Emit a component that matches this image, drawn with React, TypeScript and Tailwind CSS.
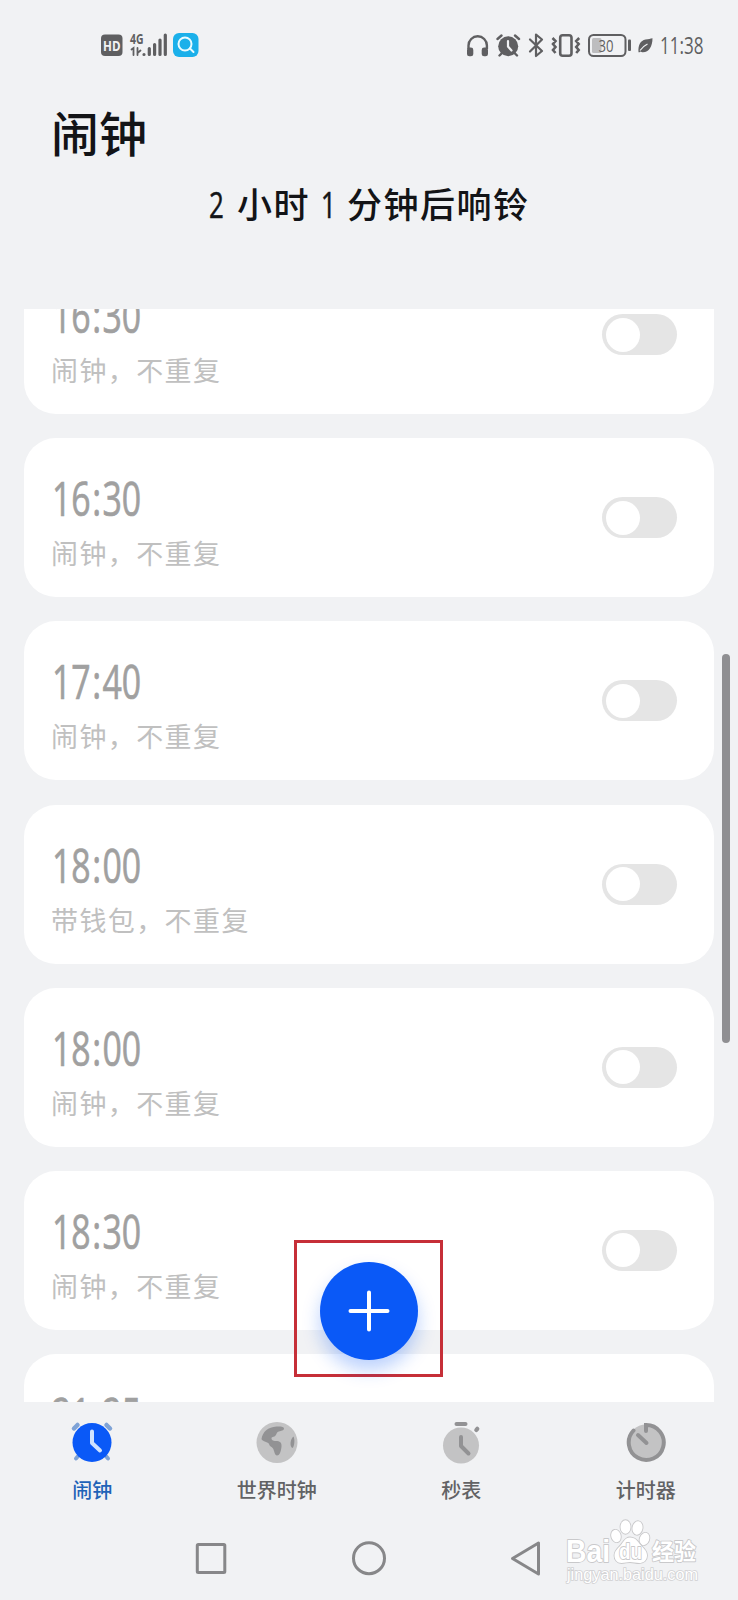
import type { ReactNode } from "react";

const alarms = [
  { time: "16:30", label: "闹钟，不重复" },
  { time: "16:30", label: "闹钟，不重复" },
  { time: "17:40", label: "闹钟，不重复" },
  { time: "18:00", label: "带钱包，不重复" },
  { time: "18:00", label: "闹钟，不重复" },
  { time: "18:30", label: "闹钟，不重复" },
  { time: "21:25", label: "闹钟，不重复" },
];

function StatusBar() {
  return (
    <div className="h-[90px] w-full">
      <svg className="block" width="738" height="90" viewBox="0 0 738 90">
        <rect x="101" y="34.5" width="21.5" height="21.5" rx="4" fill="#5f5f61" />
        <text x="103" y="50.5" fontSize="14.5" fontWeight="700" fill="#f1f2f4" textLength="17.5" lengthAdjust="spacingAndGlyphs">
          HD
        </text>
        <text x="130" y="43.5" fontSize="13.5" fontWeight="700" fill="#5f5f61" textLength="13.5" lengthAdjust="spacingAndGlyphs">
          4G
        </text>
        <g stroke="#5f5f61" strokeLinecap="round" fill="none">
          <path d="M131.5 49.5l2-1.5v7M137.5 48v7M137.5 53l3-2.5" strokeWidth="1.8" />
          <path d="M144 54.5v0M149.3 54.5v-6M154.6 54.5v-10M160 54.5v-14.5M165.3 54.5v-19.5" strokeWidth="3.2" />
        </g>
        <rect x="173" y="33" width="25.5" height="24" rx="6" fill="#1bb0ea" />
        <g stroke="#e9fbff" strokeWidth="2" fill="none" strokeLinecap="round">
          <circle cx="185" cy="44" r="6.5" />
          <path d="M190 48.5l3.5 3.5" />
        </g>

        {/* headphones */}
        <path d="M468.5 49v-3.500a9.200 9.200 0 0 1 18.400 0V49" fill="none" stroke="#5f5f61" strokeWidth="2.4" />
        <rect x="467" y="47.5" width="6.3" height="8.8" rx="2.4" fill="#5f5f61" />
        <rect x="481.7" y="47.5" width="6.3" height="8.8" rx="2.4" fill="#5f5f61" />
        {/* alarm */}
        <circle cx="508.2" cy="46.2" r="10" fill="#5f5f61" />
        <g fill="none" stroke="#5f5f61" strokeWidth="2.4" strokeLinecap="round">
          <path d="M497.5 39l4-3.5M519 39l-4-3.5M502 53l-2.5 2.5M514.5 53l2.5 2.5" />
        </g>
        <path d="M508 41v5.500l3.500 4" fill="none" stroke="#f1f2f4" strokeWidth="2.2" strokeLinecap="round" />
        {/* bluetooth */}
        <path d="M530 39.500l12 11.500-6 5V34.500l6 5L530 51.500" fill="none" stroke="#5f5f61" strokeWidth="2.2" strokeLinejoin="round" strokeLinecap="round" />
        {/* vibrate */}
        <g fill="none" stroke="#5f5f61">
          <rect x="560.2" y="35.2" width="11.3" height="20.6" rx="2.5" strokeWidth="2.6" />
          <path d="M552.5 38l3 3-2.500 3 2.500 3-2.500 3 2.500 3M579.2 38l-3 3 2.500 3-2.500 3 2.500 3-2.500 3" strokeWidth="2.6" />
        </g>
        {/* battery */}
        <rect x="589" y="35" width="36.5" height="21" rx="4.5" fill="none" stroke="#5f5f61" strokeWidth="2" />
        <rect x="592" y="38" width="9.5" height="15" rx="1.5" fill="#bdbdbf" />
        <rect x="628" y="39.5" width="3" height="11.5" rx="1" fill="#5f5f61" />
        <text x="598.5" y="52" fontSize="17" fill="#5f5f61" textLength="15" lengthAdjust="spacingAndGlyphs">
          30
        </text>
        {/* leaf */}
        <path d="M638.5 52c-.5-7 2-11.500 7-12.500 3-.6 5-.7 7-1.300 0 8-3.500 14-9.500 14-1 0-2-.3-2.500-.7l-1.500 1z" fill="#5f5f61" />
        <path d="M640 50.500c2-3 4.500-5 7.500-6.500" stroke="#f1f2f4" strokeWidth="1.2" fill="none" />
        <text x="660" y="54" fontSize="23" fill="#5f5f61" textLength="43.5" lengthAdjust="spacingAndGlyphs">
          11:38
        </text>
      </svg>
    </div>
  );
}

function AlarmCard({ time, label }: { time: string; label: string }) {
  const [hours, minutes] = time.split(":");
  return (
    <div className="flex h-[159px] shrink-0 items-center justify-between rounded-[32px] bg-white pl-7 pr-[37px]">
      <div className="flex h-full flex-col items-start pt-9">
        <div className="origin-left scale-x-[0.72] text-[47px] leading-[48px] font-medium text-[#a0a0a0] [-webkit-text-stroke:0.7px_#a0a0a0]">
          {hours}
          <span className="px-[2px]">:</span>
          {minutes}
        </div>
        <div className="mt-[18px] -ml-px text-[27px] leading-7 tracking-[1.4px] whitespace-nowrap text-[#c0c0c0]">
          {label}
        </div>
      </div>
      <div className="flex h-[41px] w-[75px] items-center rounded-full bg-[#e5e5e5] pl-1">
        <div className="size-[34px] rounded-full bg-white" />
      </div>
    </div>
  );
}

function Tab(props: { label: string; active?: boolean; children: ReactNode }) {
  const { label, active, children } = props;
  return (
    <div className="flex flex-1 flex-col items-center pt-[18px]">
      <svg width="44" height="44" viewBox="0 0 44 44" fill="none" strokeLinecap="round">
        {children}
      </svg>
      <div className={`mt-[14px] text-[20px] leading-[26px] font-medium ${active ? "text-[#1f63b8]" : "text-[#626264]"}`}>
        {label}
      </div>
    </div>
  );
}

function TabBar() {
  return (
    <div className="flex h-[108px]">
      <Tab label="闹钟" active>
        <path d="M4 8.500l3.500-3.500M36.500 5l3.500 3.500" stroke="#7fa3d6" strokeWidth="4.5" />
        <path d="M9 35l-3 3.500M35 35l3 3.500" stroke="#7fa3d6" strokeWidth="4" />
        <circle cx="22" cy="22.5" r="19.5" fill="#0a59f7" />
        <path d="M22 11.500v11.500l8 7.500" stroke="#cfe3ff" strokeWidth="4" strokeLinejoin="round" />
      </Tab>
      <Tab label="世界时钟">
        <circle cx="22" cy="22.5" r="20.5" fill="#c3c3c4" />
        <path d="M6.500 19c1-7 6.500-12 15-12.500 4-.2 7.500 0 7.500 2s-3 2.500-5 3c-3 .8-2 3-4 4.500-1.500 1.300-3.500.5-3.500 2.500 0 1.500 1.500 2.500 3.500 2.500 4.500-.2 7 1 6.500 5.500-.3 4-1.500 9-4.500 9-2.500 0-2.500-4.500-4-7-1.300-2-3.500-2-4-4.500-.4-2.200-6.800-2.300-7.500-5z" fill="#929294" />
        <path d="M38.500 16.500c-3 2-4.500 10-1 11.500 2-1.500 2.500-9 1-11.500z" fill="#929294" />
      </Tab>
      <Tab label="秒表">
        <path d="M17.500 4h9" stroke="#929294" strokeWidth="4" />
        <path d="M37.300 10l1-1.200" stroke="#929294" strokeWidth="4.2" />
        <circle cx="22" cy="25.5" r="18" fill="#c3c3c4" />
        <path d="M22 17v9l7.500 7.500" stroke="#929294" strokeWidth="4" strokeLinejoin="round" />
      </Tab>
      <Tab label="计时器">
        <circle cx="22" cy="22.5" r="18" fill="#c3c3c4" />
        <path d="M22 11V5A17.500 17.500 0 1 1 9.500 10.500" stroke="#929294" strokeWidth="4" />
        <path d="M14 15l8.500 8" stroke="#929294" strokeWidth="4" />
      </Tab>
    </div>
  );
}

function Watermark() {
  return (
    <svg className="absolute top-0 right-0" width="180" height="90" viewBox="558 1510 180 90">
      <g fill="#fff" stroke="#c9c9cb" strokeWidth="1.8" paintOrder="stroke" strokeLinejoin="round" fontWeight="700">
        <text x="566" y="1561.5" fontSize="31" fontFamily="Liberation Sans" textLength="44" lengthAdjust="spacingAndGlyphs">
          Bai
        </text>
        <ellipse cx="616" cy="1536" rx="4.7" ry="6.3" transform="rotate(-15 616 1536)" />
        <ellipse cx="625.5" cy="1527" rx="5" ry="6.8" />
        <ellipse cx="637.5" cy="1528" rx="5" ry="6.8" transform="rotate(10 637.5 1528)" />
        <ellipse cx="644.5" cy="1539" rx="4.7" ry="6.3" transform="rotate(20 644.5 1539)" />
        <path d="M630 1537.500c6 0 8 4.500 11 8 3.500 3.500 6 6 6 10 0 5-3.500 7.500-8 7.500-3 0-6-1-9-1s-5 1-8.500 1c-4.500 0-7-3.500-7-7.500s3-7 6-10c3-3.500 4.500-8 9.500-8z" />
        <text x="652" y="1560" fontSize="23" textLength="44" lengthAdjust="spacingAndGlyphs">
          经验
        </text>
        <text x="619" y="1559" fontSize="22" fontFamily="Liberation Sans" textLength="23" lengthAdjust="spacingAndGlyphs">
          du
        </text>
      </g>
      <text x="567" y="1579.5" fontSize="16.5" fontFamily="Liberation Sans" fill="#fff" stroke="#d0d0d2" strokeWidth="1.6" paintOrder="stroke" textLength="131" lengthAdjust="spacingAndGlyphs">
        jingyan.baidu.com
      </text>
    </svg>
  );
}

export default function App() {
  return (
    <div className="relative flex h-[1600px] w-[738px] flex-col overflow-hidden bg-[#f1f2f4] font-['Open_Sans','Noto_Sans_CJK_SC',sans-serif]">
      <StatusBar />
      <header className="h-[219px] text-[#131417]">
        <h1 className="pt-5 pl-[51px] text-[48px] leading-[48px] font-medium">
          闹钟
        </h1>
        <div className="mt-[27px] flex pl-[209px] text-[36px] leading-[40px] font-medium">
          <span className="w-[28px] origin-left scale-x-[0.72] [-webkit-text-stroke:0.5px]">2</span>
          <span className="w-[73px] text-[35px] tracking-[1.5px]">小时</span>
          <span className="w-[37px] origin-center scale-x-[0.75] text-center [-webkit-text-stroke:0.5px]">1</span>
          <span className="text-[35px] tracking-[1.5px]">分钟后响铃</span>
        </div>
      </header>

      <main className="relative h-[1093px] overflow-hidden px-6">
        <div className="-mt-[54px] flex flex-col gap-[24.2px]">
          {alarms.map((alarm, i) => (
            <AlarmCard key={i} time={alarm.time} label={alarm.label} />
          ))}
        </div>
        <div className="absolute top-[345px] right-[8px] h-[389px] w-[8px] rounded-full bg-[#8f8f92]" />
        <div className="absolute top-[931px] left-[294px] flex h-[137px] w-[149px] items-center justify-center border-[3px] border-[#c62f38]">
          <button className="mt-1 flex size-[98px] items-center justify-center rounded-full bg-[#0a59f7] shadow-[0_10px_18px_rgba(10,89,247,0.28)]">
            <svg width="42" height="42" viewBox="0 0 42 42">
              <path d="M21 2.500v37M2.500 21h37" stroke="#fff" strokeWidth="4" strokeLinecap="round" />
            </svg>
          </button>
        </div>
      </main>

      <TabBar />

      <div className="relative h-[90px]">
        <svg className="block" width="738" height="90" viewBox="0 0 738 90" fill="none" stroke="#878789" strokeWidth="3" strokeLinejoin="round">
          <rect x="197.3" y="34.5" width="27.5" height="28" rx="1" />
          <circle cx="369" cy="48.2" r="15.5" />
          <path d="M538.500 33v31L512.500 48.500z" />
        </svg>
        <Watermark />
      </div>
    </div>
  );
}
